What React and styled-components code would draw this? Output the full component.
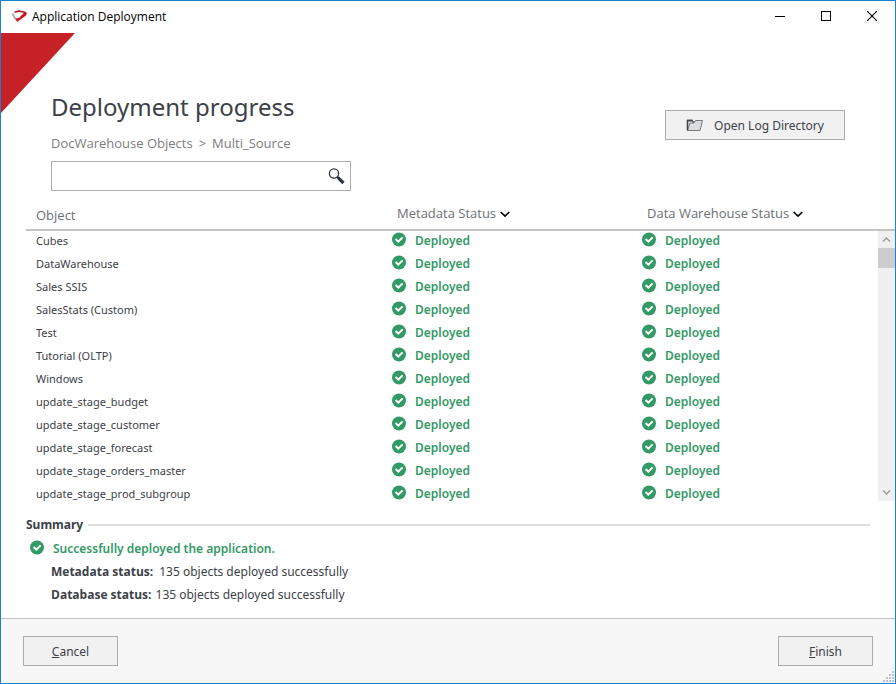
import React, { useState } from 'react';
import styled, { createGlobalStyle, css } from 'styled-components';

const openSans = css`font-family: "Open Sans", "Noto Sans", sans-serif;`;

const GlobalStyle = createGlobalStyle`
  *, *::before, *::after { box-sizing: border-box; }
  body {
    margin: 0;
    background: #fff;
    color: #3c4147;
    font-family: "Noto Sans", "Open Sans", sans-serif;
    font-size: 12px;
  }
  button, input { font: inherit; color: inherit; }
`;

const Window = styled.div`
  position: relative;
  display: flex;
  flex-direction: column;
  height: 100vh;
  min-height: 480px;
  border: 1px solid #1a80d2;
  overflow: hidden;
`;

const TitleBar = styled.header`
  display: flex;
  align-items: center;
  height: 32px;
  flex: none;
  padding: 0 0 2px 10px;
  color: #000;
`;

const AppName = styled.span`
  flex: 1;
  margin-left: 4px;
  font-size: 12px;
  ${openSans}
`;

const CaptionButton = styled.button`
  display: grid;
  place-items: center;
  width: 46px;
  height: 30px;
  padding: 0;
  border: 0;
  background: none;
`;

const Corner = styled.svg`
  position: absolute;
  top: 32px;
  left: 0;
`;

const PageHeader = styled.section`
  display: flex;
  justify-content: space-between;
  flex: none;
  padding: 56px 50px 0;
`;

const Title = styled.h1`
  margin: 0;
  font-size: 24px;
  line-height: 36px;
  font-weight: 400;
`;

const Breadcrumb = styled.nav`
  display: flex;
  gap: 6px;
  margin-top: 8px;
  font-size: 13px;
  line-height: 20px;
  color: #7d7d7d;
  ${openSans}
`;

const Crumb = styled.a`
  color: inherit;
  text-decoration: none;
`;

const SearchBox = styled.label`
  display: flex;
  align-items: center;
  width: 300px;
  height: 30px;
  margin-top: 8px;
  padding: 0 5px 0 8px;
  border: 1px solid #abadb3;
  background: #fff;
`;

const SearchInput = styled.input`
  flex: 1;
  min-width: 0;
  border: 0;
  outline: 0;
  background: none;
`;

const Button = styled.button`
  display: flex;
  align-items: center;
  justify-content: center;
  gap: 10px;
  min-width: ${(p) => (p.$wide ? '180px' : '95px')};
  height: 30px;
  padding: 0;
  border: 1px solid #abadb3;
  background: #f1f1f1;
  font-size: 12px;
  ${(p) => p.$wide && css`margin-top: 21px;`}
`;

const ListArea = styled.section`
  display: grid;
  grid-template-columns: minmax(0, 1fr) 17px;
  flex: 1;
  min-height: 0;
  margin-top: 10px;
  padding-left: 25px;
`;

const Table = styled.table`
  display: flex;
  flex-direction: column;
  min-height: 0;
  border-collapse: collapse;
`;

const TableHead = styled.thead`
  display: block;
  height: 30px;
  flex: none;
  border-bottom: 2px solid #c3c5c3;
`;

const TableBody = styled.tbody`
  display: block;
  flex: 1;
  min-height: 0;
  overflow: hidden;
`;

const Row = styled.tr`
  display: grid;
  grid-template-columns: 366px 250px 1fr;
  height: 23px;
`;

const HeadCell = styled.th`
  padding: ${(p) => (p.$sortable ? '2px 0 0 5px' : '4px 0 0 10px')};
  font-size: 13px;
  line-height: 20px;
  font-weight: 400;
  text-align: left;
  color: #6b6f75;
  ${openSans}
`;

const SortButton = styled.button`
  display: flex;
  align-items: center;
  gap: 4px;
  padding: 0;
  border: 0;
  background: none;

  svg { margin-top: 2px; }
`;

const NameCell = styled.td`
  padding: 0 10px;
  font-size: 11px;
  line-height: 20px;
`;

const StatusCell = styled.td`
  padding: 0;
`;

const Status = styled.span`
  display: flex;
  align-items: flex-start;
  gap: 8px;
  font-size: 12px;
  line-height: 20px;
  font-weight: 600;
  color: #339966;

  svg { margin-top: 1px; }
`;

const ScrollColumn = styled.div`
  display: flex;
  flex-direction: column;
  min-height: 0;
`;

const ScrollHead = styled.div`
  height: 30px;
  flex: none;
  border-bottom: 2px solid #c3c5c3;
`;

const ScrollArrow = styled.button`
  display: grid;
  place-items: center;
  height: 17px;
  flex: none;
  padding: 0;
  border: 0;
  background: #f0f0f0;
`;

const ScrollTrack = styled.div`
  flex: 1;
  background: #f0f0f0;
`;

const ScrollThumb = styled.div`
  height: 20px;
  background: #cdcdcd;
`;

const Summary = styled.section`
  flex: none;
  padding: 12px 25px;
`;

const SummaryTitle = styled.h2`
  display: flex;
  align-items: center;
  gap: 5px;
  margin: 0;
  font-size: 12px;
  line-height: 24px;
  font-weight: 700;

  &::after {
    content: "";
    flex: 1;
    height: 2px;
    background: #dfdfdf;
  }
`;

const SuccessLine = styled.div`
  height: 23px;
  padding: 2px 0 0 4px;
`;

const SummaryLine = styled.p`
  display: flex;
  gap: ${(p) => (p.$gap ? '6px' : '4px')};
  margin: 0;
  padding-left: 25px;
  font-size: 12px;
  line-height: 23px;

  b { ${openSans} }
`;

const Footer = styled.footer`
  display: flex;
  justify-content: space-between;
  flex: none;
  position: relative;
  padding: 17px 22px;
  border-top: 1px solid #c0c0c0;
  background: #f7f7f7;
`;

const Grip = styled.svg`
  position: absolute;
  right: 1px;
  bottom: 1px;
`;

const AppLogo = () => (
  <svg width="17" height="14" viewBox="0 0 17 14" aria-hidden="true">
    <path d="M1.5 4.5 5 11" stroke="#b4b4b4" strokeWidth="2" fill="none" />
    <path d="M3.5 3.2 8 2 14.5 3.5" stroke="#a5121c" strokeWidth="1.4" fill="none" />
    <path d="M4.5 9.5 8 9 14 2.8 16 4 15 6.5 6 13Z" fill="#d0101d" />
  </svg>
);

const CheckIcon = () => (
  <svg width="15" height="15" viewBox="0 0 15 15" aria-hidden="true">
    <circle cx="7" cy="7.5" r="7" fill="#339966" />
    <path d="M3.6 7 6.3 9.7 10.6 5.4" stroke="#fff" strokeWidth="2" fill="none" />
  </svg>
);

const Chevron = () => (
  <svg width="10" height="8" viewBox="0 0 10 8" aria-hidden="true">
    <path d="M.7 2 5 6 9.3 2" stroke="#000" strokeWidth="1.7" fill="none" />
  </svg>
);

const SearchIcon = () => (
  <svg width="17" height="17" viewBox="0 0 17 17" aria-hidden="true">
    <circle cx="6" cy="5.5" r="4.6" stroke="#2d3540" strokeWidth="1.3" fill="none" />
    <path d="M9 8.5 11 10.5" stroke="#2d3540" strokeWidth="1.8" />
    <path d="M10 9.7 15.5 15" stroke="#2d3540" strokeWidth="3.2" />
  </svg>
);

const FolderIcon = () => (
  <svg width="18" height="14" viewBox="0 0 18 14" aria-hidden="true">
    <path d="M1.5 12V2.5H6L7 4H14" stroke="#4d5257" strokeWidth="1.3" fill="#e5e5e5" />
    <path d="M1.5 12.5 4 5H8L9.5 2.5H16.5L14 12.5Z" fill="#dcdcdc" stroke="#777b7f" />
    <path d="M1.5 12.5V2.5H6.5" stroke="#3f454b" strokeWidth="1.3" fill="none" />
  </svg>
);

const ScrollChevron = ({ down }) => (
  <svg width="9" height="7" viewBox="0 0 9 7" aria-hidden="true">
    <path d={down ? 'M1 1.5 4.5 5 8 1.5' : 'M1 5.5 4.5 2 8 5.5'} stroke="#9c9c9c" strokeWidth="1.5" fill="none" />
  </svg>
);

const OBJECTS = [
  'Cubes',
  'DataWarehouse',
  'Sales SSIS',
  'SalesStats (Custom)',
  'Test',
  'Tutorial (OLTP)',
  'Windows',
  'update_stage_budget',
  'update_stage_customer',
  'update_stage_forecast',
  'update_stage_orders_master',
  'update_stage_prod_subgroup',
];

const GRIP_DOTS = [[9, 0], [6, 3], [9, 3], [3, 6], [6, 6], [9, 6], [0, 9], [3, 9], [6, 9], [9, 9]];

const StatusLabel = ({ children }) => (
  <Status>
    <CheckIcon />
    {children}
  </Status>
);

export default function App() {
  const [query, setQuery] = useState('');
  const rows = OBJECTS.filter((name) => name.toLowerCase().includes(query.toLowerCase()));

  return (
    <>
      <GlobalStyle />
      <Window>
        <TitleBar>
          <AppLogo />
          <AppName>Application Deployment</AppName>
          <CaptionButton type="button" aria-label="Minimize">
            <svg width="10" height="10" shapeRendering="crispEdges"><path d="M0 5.5H10" stroke="#000" /></svg>
          </CaptionButton>
          <CaptionButton type="button" aria-label="Maximize">
            <svg width="10" height="10" shapeRendering="crispEdges"><path d="M.5 .5H9.5V9.5H.5Z" stroke="#000" fill="none" /></svg>
          </CaptionButton>
          <CaptionButton type="button" aria-label="Close">
            <svg width="10" height="10"><path d="M0 0 10 10M10 0 0 10" stroke="#000" strokeWidth="1.1" /></svg>
          </CaptionButton>
        </TitleBar>
        <Corner width="74" height="80" aria-hidden="true">
          <path d="M0 0H74L0 80Z" fill="#c62127" />
        </Corner>
        <PageHeader>
          <div>
            <Title>Deployment progress</Title>
            <Breadcrumb aria-label="Breadcrumb">
              <Crumb href="#objects">DocWarehouse Objects</Crumb>
              <span>&gt;</span>
              <Crumb href="#multi-source">Multi_Source</Crumb>
            </Breadcrumb>
            <SearchBox>
              <SearchInput aria-label="Search objects" value={query} onChange={(e) => setQuery(e.target.value)} />
              <SearchIcon />
            </SearchBox>
          </div>
          <Button type="button" $wide>
            <FolderIcon />
            Open Log Directory
          </Button>
        </PageHeader>
        <ListArea>
          <Table>
            <TableHead>
              <Row>
                <HeadCell scope="col">Object</HeadCell>
                <HeadCell scope="col" $sortable>
                  <SortButton type="button">Metadata Status<Chevron /></SortButton>
                </HeadCell>
                <HeadCell scope="col" $sortable>
                  <SortButton type="button">Data Warehouse Status<Chevron /></SortButton>
                </HeadCell>
              </Row>
            </TableHead>
            <TableBody>
              {rows.map((name) => (
                <Row key={name}>
                  <NameCell>{name}</NameCell>
                  <StatusCell><StatusLabel>Deployed</StatusLabel></StatusCell>
                  <StatusCell><StatusLabel>Deployed</StatusLabel></StatusCell>
                </Row>
              ))}
            </TableBody>
          </Table>
          <ScrollColumn>
            <ScrollHead />
            <ScrollArrow type="button" aria-label="Scroll up"><ScrollChevron /></ScrollArrow>
            <ScrollTrack><ScrollThumb /></ScrollTrack>
            <ScrollArrow type="button" aria-label="Scroll down"><ScrollChevron down /></ScrollArrow>
          </ScrollColumn>
        </ListArea>
        <Summary>
          <SummaryTitle>Summary</SummaryTitle>
          <SuccessLine><StatusLabel>Successfully deployed the application.</StatusLabel></SuccessLine>
          <SummaryLine $gap><b>Metadata status:</b><span>135 objects deployed successfully</span></SummaryLine>
          <SummaryLine><b>Database status:</b><span>135 objects deployed successfully</span></SummaryLine>
        </Summary>
        <Footer>
          <Button type="button"><span><u>C</u>ancel</span></Button>
          <Button type="button"><span><u>F</u>inish</span></Button>
          <Grip width="11" height="11" aria-hidden="true">
            {GRIP_DOTS.map(([x, y]) => <rect key={`${x}-${y}`} x={x} y={y} width="2" height="2" fill="#bcc2d4" />)}
          </Grip>
        </Footer>
      </Window>
    </>
  );
}
